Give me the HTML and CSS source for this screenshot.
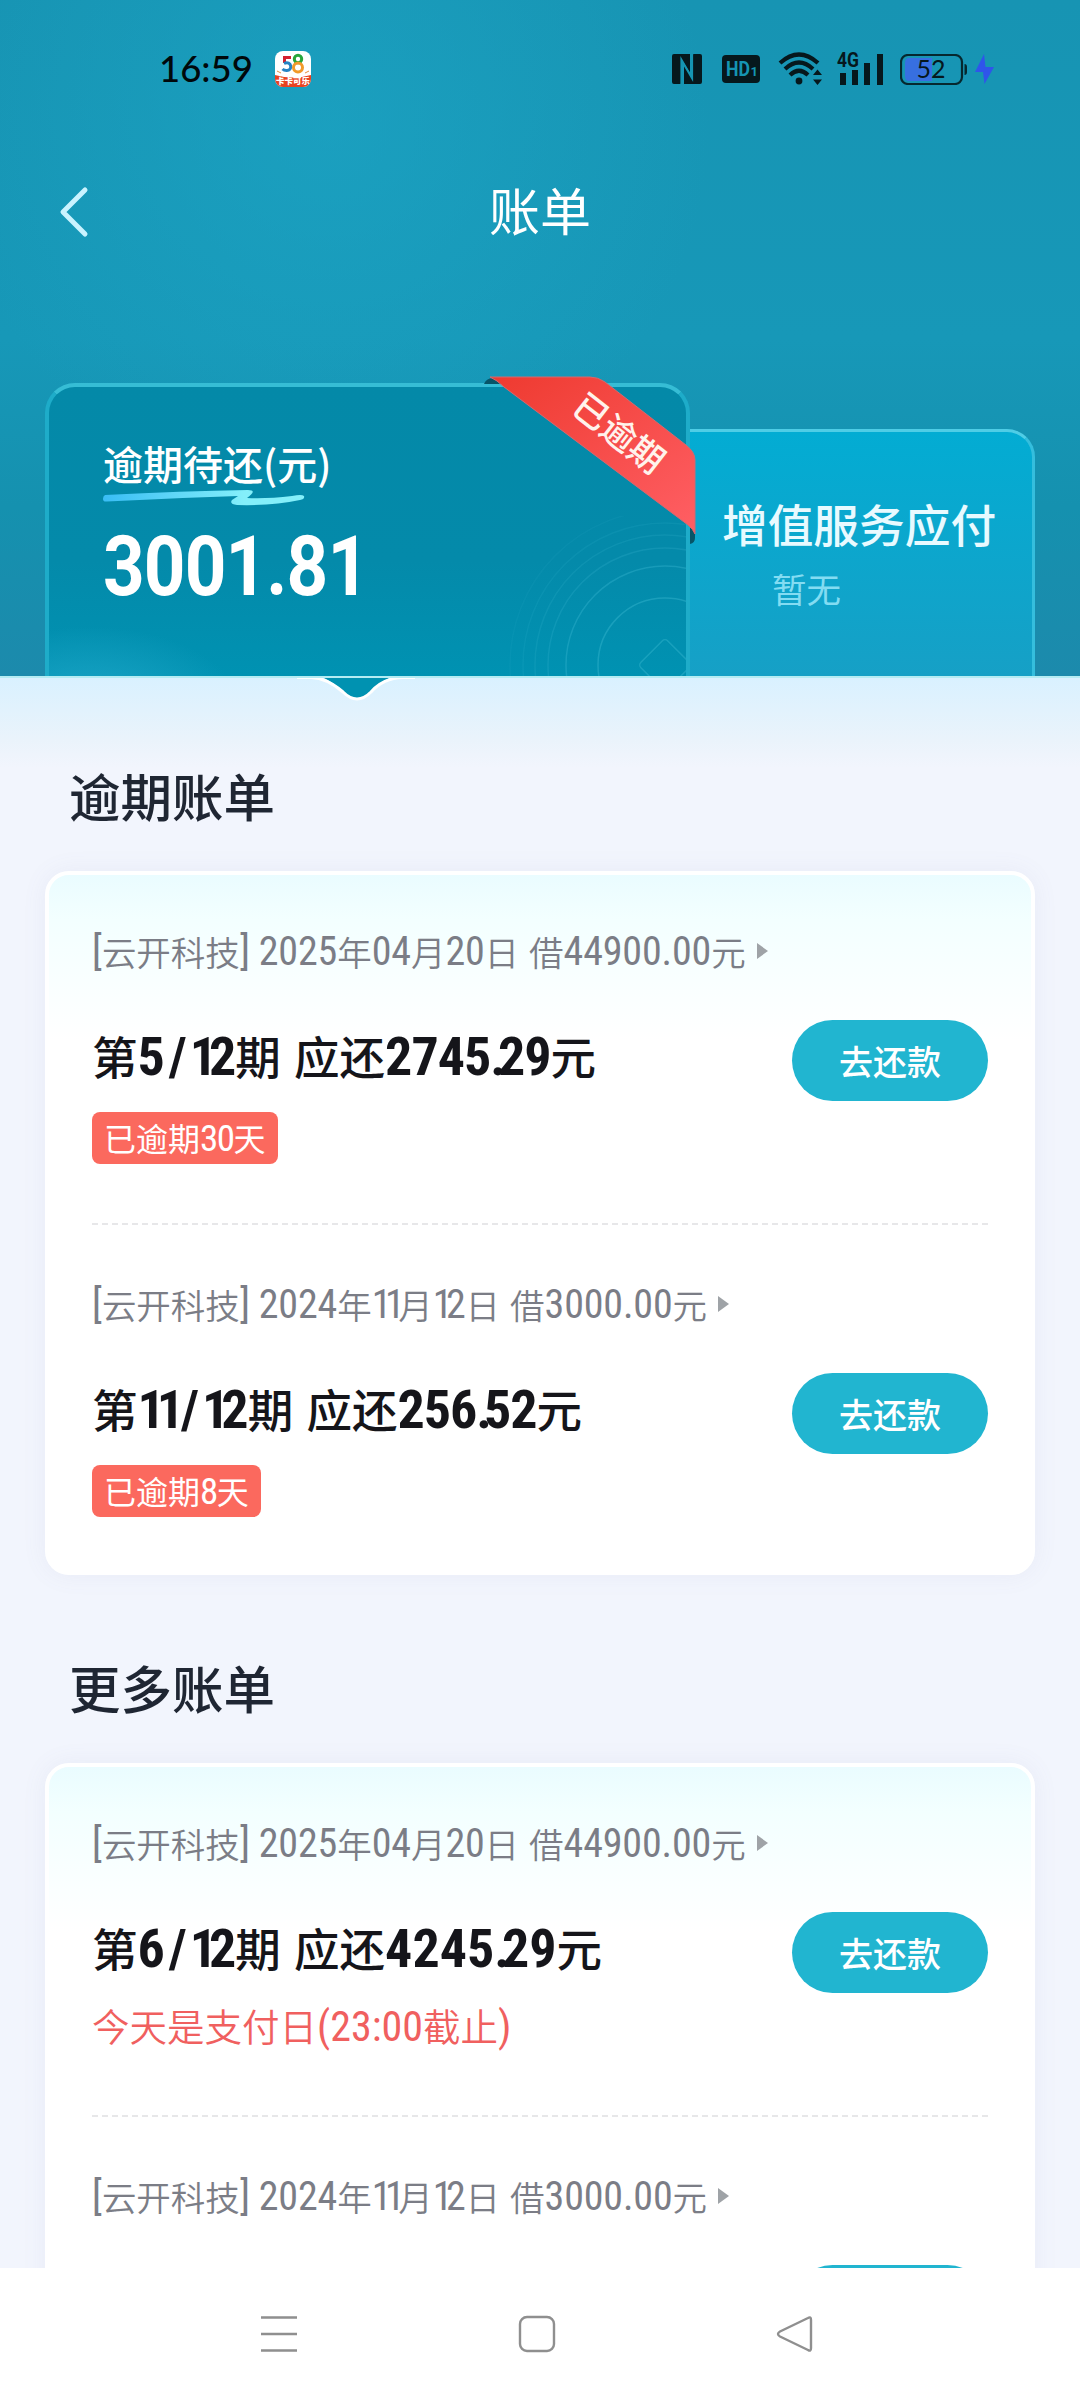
FILE: index.html
```html
<!DOCTYPE html>
<html lang="zh-CN">
<head>
    <meta charset="UTF-8" />
    <meta name="viewport" content="width=device-width, initial-scale=1" />
    <title>账单</title>
    <link rel="stylesheet" href="styles.css">
</head>
<body>

<header class="header">
    <div class="status-bar">
        <span class="time">16:59</span>
        <svg class="app-icon" width="36" height="36" viewBox="0 0 36 36">
            <clipPath id="app-clip"><rect width="36" height="36" rx="8"/></clipPath>
            <g clip-path="url(#app-clip)">
                <rect width="36" height="36" fill="#fff"/>
                <path d="M0 24 Q18 29 36 24 V36 H0z" fill="#e8421f"/>
                <g fill="none" stroke-width="3">
                    <path d="M16 6.500H9.500V12" stroke="#d3202f"/>
                    <path d="M9 12.500C17 9 18 20 11.500 19.500Q9 19.500 7.500 18" stroke="#2583c4"/>
                    <circle cx="23" cy="8" r="3.700" stroke="#28a63b"/>
                    <circle cx="23" cy="16.500" r="4.500" stroke="#f19a2b"/>
                </g>
                <path d="M2 20l4 2M34 20l-4 2" stroke="#e98b3b" stroke-width="1"/>
                <text class="app-label" x="18" y="32.500" text-anchor="middle">卡卡可乐</text>
            </g>
        </svg>
        <div class="status-icons">
            <svg width="30" height="30" viewBox="0 0 30 30">
                <path d="M2 0H18V19L10 6V28Q10 30 8 30H2Q0 30 0 28V2Q0 0 2 0z" fill="#06181d"/>
                <path d="M22 0H28Q30 0 30 2V28Q30 30 28 30H12V11L20 24V2Q20 0 22 0z" fill="#06181d"/>
                <path d="M9.500 30V6L20 24V0" fill="none" stroke="#1595b2" stroke-width="2.200"/>
            </svg>
            <svg class="hd" width="38" height="28" viewBox="0 0 38 28">
                <rect width="38" height="28" rx="4" fill="#06181d"/>
                <text class="hd-text" x="4" y="21" textLength="24" lengthAdjust="spacingAndGlyphs">HD</text>
                <text class="hd-num" x="28.500" y="21">1</text>
            </svg>
            <svg class="wifi" width="46" height="36" viewBox="0 0 46 36">
                <g fill="none" stroke="#06181d" stroke-width="4.200">
                    <path d="M2 12Q21 -5 40 12"/>
                    <path d="M7 18Q21 5 35 18"/>
                    <path d="M12 24Q21 15.500 30 24"/>
                </g>
                <circle cx="21" cy="30" r="3.400" fill="#06181d"/>
                <path d="M35 24L39.500 18.500L44 24zM35 28.500L39.500 34L44 28.500z" fill="#06181d"/>
            </svg>
            <svg class="signal" width="47" height="46" viewBox="0 -6 47 46">
                <path d="M3 21h6v12H3zM15 18h6v15h-6zM27 11h6v22h-6zM40 2h6v31h-6z" fill="#06181d"/>
                <text class="signal-text" x="0" y="15" textLength="22" lengthAdjust="spacingAndGlyphs">4G</text>
            </svg>
            <svg class="battery" width="95" height="31" viewBox="0 0 95 31">
                <path d="M9 4H32V27H9Q5 27 5 22V9Q5 4 9 4z" fill="#376fe0"/>
                <rect x="1" y="1" width="61" height="29" rx="7" fill="none" stroke="#06282f" stroke-width="2.200"/>
                <path d="M64.500 10Q67 10 67 13V18Q67 21 64.500 21z" fill="#06282f"/>
                <text class="battery-text" x="31" y="24" text-anchor="middle">52</text>
                <path d="M84 0L75 18H83L84.500 30L94 13H85.500z" fill="#2f55ea"/>
            </svg>
        </div>
    </div>

    <div class="nav">
        <svg class="back" width="30" height="52" viewBox="0 0 30 52">
            <path d="M26 4L4 26L26 48" fill="none" stroke="#c9f3ff" stroke-width="5" stroke-linecap="round" stroke-linejoin="round"/>
        </svg>
        <h1>账单</h1>
    </div>

    <div class="tabs">
        <div class="tab tab-active">
            <svg class="rings" width="184" height="160" viewBox="0 0 184 160">
                <g fill="none" stroke="#38b5cf" stroke-width="1.500">
                    <circle cx="163" cy="149" r="67" opacity=".45"/>
                    <circle cx="163" cy="149" r="99" opacity=".4"/>
                    <circle cx="163" cy="149" r="117" opacity=".25"/>
                    <circle cx="163" cy="149" r="130" opacity=".2"/>
                    <circle cx="163" cy="149" r="142" opacity=".15"/>
                    <circle cx="163" cy="149" r="155" opacity=".1"/>
                    <rect x="144" y="130" width="38" height="38" rx="4" transform="rotate(45 163 149)" opacity=".45"/>
                </g>
            </svg>
            <div class="tab-label">逾期待还(元)</div>
            <svg class="scribble" width="206" height="18" viewBox="0 0 206 18">
                <defs>
                    <linearGradient id="scribble-color">
                        <stop offset="0" stop-color="#39bdf5"/>
                        <stop offset=".7" stop-color="#84effa"/>
                    </linearGradient>
                </defs>
                <path d="M3 5Q1 6 1 9Q1 12 5 11.500Q70 8 136 6L130 10Q127 14 135 15Q170 16 198 10Q203 9 202 6Q200 4 190 6Q165 9 145 8Q156 0 146 0Q80 1 3 5z" fill="url(#scribble-color)"/>
            </svg>
            <div class="amount">3001.81</div>
            <svg class="ribbon" width="214" height="170" viewBox="0 0 214 170">
                <defs>
                    <linearGradient id="ribbon-color" x1="0" y1="0" x2="1" y2="1">
                        <stop offset="0" stop-color="#ee3a30"/>
                        <stop offset="1" stop-color="#ff5f64"/>
                    </linearGradient>
                </defs>
                <path d="M2 8Q5 0 16 3L22 8zM208 150L213 152V162Q213 167 208 168z" fill="#075568"/>
                <path d="M8 1H108Q116 1 123 6L204 69Q213 76 213 84V158Q211 153 206 149L22 11Q15 4 8 1z" fill="url(#ribbon-color)" stroke="#d06a70" stroke-width="1"/>
                <text class="ribbon-text" text-anchor="middle" transform="translate(137 57) rotate(38)" x="0" y="13">已逾期</text>
            </svg>
        </div>
        <div class="tab tab-side">
            <div class="side-label">增值服务应付</div>
            <div class="side-value">暂无</div>
        </div>
    </div>
</header>

<main class="content">
    <svg class="notch" width="120" height="28" viewBox="0 0 120 28">
        <path d="M22 0Q34 4 46 16Q60 30 74 16Q84 4 98 0z" fill="#0092b1"/>
        <path d="M0 1.500H14Q30 2 46 16Q60 30 74 16Q86 2 106 1.500H118" fill="none" stroke="#fff" stroke-width="3"/>
    </svg>

    <h2>逾期账单</h2>
    <section class="card">
        <div class="bill">
            <div class="bill-info"><i>[</i>云开科技<i>] 2025</i>年<i>04</i>月<i>20</i>日<i class="gap"> </i>借<i>44900.00</i>元<span class="caret"></span></div>
            <div class="bill-main">
                <div class="bill-amount">第<b>5<span class="slash">/</span><span class="thin">1</span>2</b>期 应还<b>2745<span class="thin">.</span>29</b>元</div>
                <button class="pay-btn">去还款</button>
            </div>
            <div class="badge">已逾期<i>30</i>天</div>
        </div>
        <div class="bill">
            <div class="bill-info"><i>[</i>云开科技<i>] 2024</i>年<i class="ones">11</i>月<i class="ones">1</i><i>2</i>日<i class="gap"> </i>借<i>3000.00</i>元<span class="caret"></span></div>
            <div class="bill-main">
                <div class="bill-amount">第<b><span class="thin">11</span><span class="slash">/</span><span class="thin">1</span>2</b>期 应还<b>256<span class="thin">.</span>52</b>元</div>
                <button class="pay-btn">去还款</button>
            </div>
            <div class="badge">已逾期<i>8</i>天</div>
        </div>
    </section>

    <h2>更多账单</h2>
    <section class="card">
        <div class="bill">
            <div class="bill-info"><i>[</i>云开科技<i>] 2025</i>年<i>04</i>月<i>20</i>日<i class="gap"> </i>借<i>44900.00</i>元<span class="caret"></span></div>
            <div class="bill-main">
                <div class="bill-amount">第<b>6<span class="slash">/</span><span class="thin">1</span>2</b>期 应还<b class="wide">4245<span class="thin">.</span>29</b>元</div>
                <button class="pay-btn">去还款</button>
            </div>
            <div class="due">今天是支付日<i>(23:00</i>截止<i>)</i></div>
        </div>
        <div class="bill">
            <div class="bill-info"><i>[</i>云开科技<i>] 2024</i>年<i class="ones">11</i>月<i class="ones">1</i><i>2</i>日<i class="gap"> </i>借<i>3000.00</i>元<span class="caret"></span></div>
            <div class="bill-main">
                <div class="bill-amount"></div>
                <button class="pay-btn"></button>
            </div>
        </div>
    </section>
</main>

<footer class="system-nav">
    <svg width="38" height="38" viewBox="0 0 38 38">
        <path d="M1 2.500H37M1 19H37M1 35.500H37" stroke="#8f8f8f" stroke-width="2.500"/>
    </svg>
    <svg width="38" height="38" viewBox="0 0 38 38">
        <rect x="2" y="2" width="34" height="34" rx="7" fill="none" stroke="#8f8f8f" stroke-width="2.400"/>
    </svg>
    <svg width="38" height="38" viewBox="0 0 38 38">
        <path d="M32 3Q35 1 35 5V33Q35 37 32 35L4 21.500Q0 19 4 16.500z" fill="none" stroke="#8f8f8f" stroke-width="2.400" stroke-linejoin="round"/>
    </svg>
</footer>

</body>
</html>
```
FILE: styles.css
```css
* {
    box-sizing: border-box;
}
body {
    font-family: Roboto, 'Noto Sans CJK SC', sans-serif;
    margin: 0;
    width: 1080px;
    height: 2400px;
    overflow: hidden;
    display: flex;
    flex-direction: column;
    background: #f2f5fd;
    color: #15151a;
}
h1, h2 {
    margin: 0;
    font-family: 'Noto Sans CJK SC', sans-serif;
}
svg {
    display: block;
    flex: none;
}
i, b {
    font-style: normal;
    font-family: Roboto, sans-serif;
    font-stretch: 85%;
    white-space: pre;
}

/* header */
.header {
    height: 676px;
    flex: none;
    background:
        radial-gradient(circle at 330px 130px, rgba(29,166,198,0.6), rgba(29,166,198,0) 380px),
        linear-gradient(180deg, #1794b3 0%, #1798b8 50%, #1591af 75%, #1c8aac 100%);
}
.status-bar {
    height: 138px;
    padding: 0 85px 0 159px;
    display: flex;
    align-items: center;
}
.time {
    font-family: Lato, sans-serif;
    font-size: 36.500px;
    font-weight: 500;
    color: #00080b;
    width: 116px;
    padding-bottom: 2px;
}
.app-label {
    font: 900 8.500px 'Noto Sans CJK SC', sans-serif;
    fill: #fff;
}
.status-icons {
    margin-left: auto;
    display: flex;
    align-items: center;
}
.hd {
    margin-left: 20px;
}
.hd-text {
    font: 700 21px Roboto, sans-serif;
    fill: #1595b2;
}
.hd-num {
    font: 700 13px Roboto, sans-serif;
    fill: #1595b2;
}
.wifi {
    margin-left: 18px;
}
.signal {
    margin-left: 13px;
}
.signal-text {
    font: 700 21px Roboto, sans-serif;
    fill: #06181d;
}
.battery {
    margin-left: 16px;
}
.battery-text {
    font: 400 25px Lato, sans-serif;
    fill: #06181d;
}
.nav {
    height: 148px;
    display: grid;
    grid-template-columns: 100px 1fr 100px;
    align-items: center;
}
.back {
    margin-left: 59px;
}
.nav h1 {
    color: #fff;
    font-size: 51px;
    font-weight: 400;
    line-height: 60px;
    padding-bottom: 6px;
    text-align: center;
}
.tabs {
    height: 390px;
    padding: 0 45px;
    display: flex;
    align-items: flex-end;
}
.tab-active {
    position: relative;
    z-index: 1;
    width: 645px;
    height: 293px;
    padding: 52px 0 0 54px;
    border: 4px solid #1eacc9;
    border-top-color: #36bdd5;
    border-bottom: 0;
    border-radius: 30px 30px 0 0;
    background:
        radial-gradient(ellipse at 40px 320px, #1ea5c7, rgba(30,165,199,0) 150px),
        linear-gradient(180deg, #0489a8, #048aaa 60%, #0092b2);
}
.rings {
    position: absolute;
    right: 0;
    bottom: 0;
}
.tab-label {
    font-family: 'Noto Sans CJK SC', sans-serif;
    font-size: 40px;
    font-weight: 500;
    line-height: 48px;
    color: #fff;
}
.scribble {
    margin: 3px 0 0 -1px;
}
.amount {
    font-size: 83px;
    font-weight: 700;
    line-height: 84px;
    margin-top: 17px;
    letter-spacing: -1px;
    color: #fff;
    transform: scaleX(0.876);
    transform-origin: 0 0;
}
.ribbon {
    position: absolute;
    top: -11px;
    right: -10px;
}
.ribbon-text {
    font: 500 35px 'Noto Sans CJK SC', sans-serif;
    fill: #fff3ec;
}
.tab-side {
    width: 345px;
    height: 247px;
    padding: 63px 0 0 32px;
    border: 3px solid #35bedd;
    border-top-color: #4fcde6;
    border-bottom: 0;
    border-left: 0;
    border-radius: 0 28px 0 0;
    background: linear-gradient(180deg, #03acd3, #16a0c6);
    font-family: 'Noto Sans CJK SC', sans-serif;
}
.side-label {
    font-size: 45.700px;
    font-weight: 500;
    line-height: 56px;
    color: #e8faff;
    white-space: nowrap;
}
.side-value {
    margin: 16px 0 0 50px;
    font-size: 34.500px;
    line-height: 42px;
    color: #83dcf2;
}

/* content */
.content {
    position: relative;
    flex: 1;
    overflow: hidden;
    border-top: 2px solid #b4ecf3;
    padding: 0 45px;
    background: linear-gradient(180deg, #d9f1ff, #eaf3fb 62px, #f2f5fd 90px);
}
.notch {
    position: absolute;
    left: 297px;
    top: -2px;
}
.content h2 {
    margin: 87px 0 46px 24px;
    font-size: 51.500px;
    font-weight: 500;
    line-height: 60px;
    color: #1f2633;
}
.card {
    height: 704px;
    padding: 0 43px;
    border: 4px solid #fff;
    border-radius: 24px;
    background: linear-gradient(180deg, #eafcff, #f3ffff 45px, #fff 165px);
    box-shadow: 0 0 24px rgba(120,120,170,0.08);
}
.content .card + h2 {
    margin-top: 82px;
}
.bill {
    height: 352px;
    padding-top: 50px;
}
.bill + .bill {
    padding-top: 55px;
    background: repeating-linear-gradient(90deg, #e7e7e9 0 6px, transparent 6px 10px) 0 0 / 100% 2px no-repeat;
}
.bill:first-child {
    height: 348px;
}
.bill-info {
    height: 52px;
    display: flex;
    align-items: center;
    font-family: 'Noto Sans CJK SC', sans-serif;
    font-size: 34.500px;
    font-weight: 350;
    color: #7b7d86;
}
.bill-info i {
    font-size: 40px;
    font-weight: 380;
    letter-spacing: -0.150px;
}
.bill-info .ones {
    letter-spacing: -6.500px;
}
.bill-info .gap {
    width: 10px;
}
.caret {
    margin-left: 11px;
    border-left: 11px solid #9fa3a7;
    border-top: 8px solid transparent;
    border-bottom: 8px solid transparent;
}
.bill-main {
    margin-top: 43px;
    height: 81px;
    display: flex;
    justify-content: space-between;
}
.bill-amount {
    font-family: 'Noto Sans CJK SC', sans-serif;
    font-size: 45.500px;
    font-weight: 500;
    line-height: 71px;
    white-space: nowrap;
    word-spacing: 3px;
}
.bill-amount b {
    font-size: 54px;
    font-weight: 700;
    letter-spacing: -1px;
}
.bill-amount .wide {
    letter-spacing: 0;
}
.bill-amount .thin {
    letter-spacing: -8px;
}
.slash {
    margin: 0 4px 0 5px;
}
.pay-btn {
    width: 196px;
    height: 81px;
    border: none;
    border-radius: 41px;
    background: #21b5d0;
    color: #fff;
    font-family: 'Noto Sans CJK SC', sans-serif;
    font-size: 34px;
    font-weight: 500;
    padding: 0 0 1px;
}
.badge {
    margin-top: 11px;
    width: fit-content;
    height: 52px;
    padding: 0 12px;
    border-radius: 8px;
    background: #fb695e;
    color: #fff;
    font-family: 'Noto Sans CJK SC', sans-serif;
    font-size: 32px;
    line-height: 50px;
    display: flex;
}
.badge i {
    font-size: 37px;
    line-height: 53px;
    letter-spacing: -1.500px;
}
.due {
    margin-top: 7px;
    display: flex;
    font-family: 'Noto Sans CJK SC', sans-serif;
    font-size: 37.500px;
    font-weight: 350;
    line-height: 50px;
    color: #f0605f;
}
.due i {
    font-size: 42px;
    font-weight: 400;
    line-height: 54px;
}

/* system navigation */
.system-nav {
    height: 132px;
    flex: none;
    padding: 0 266px 0 260px;
    display: flex;
    align-items: center;
    justify-content: space-between;
    background: #fff;
}
```
